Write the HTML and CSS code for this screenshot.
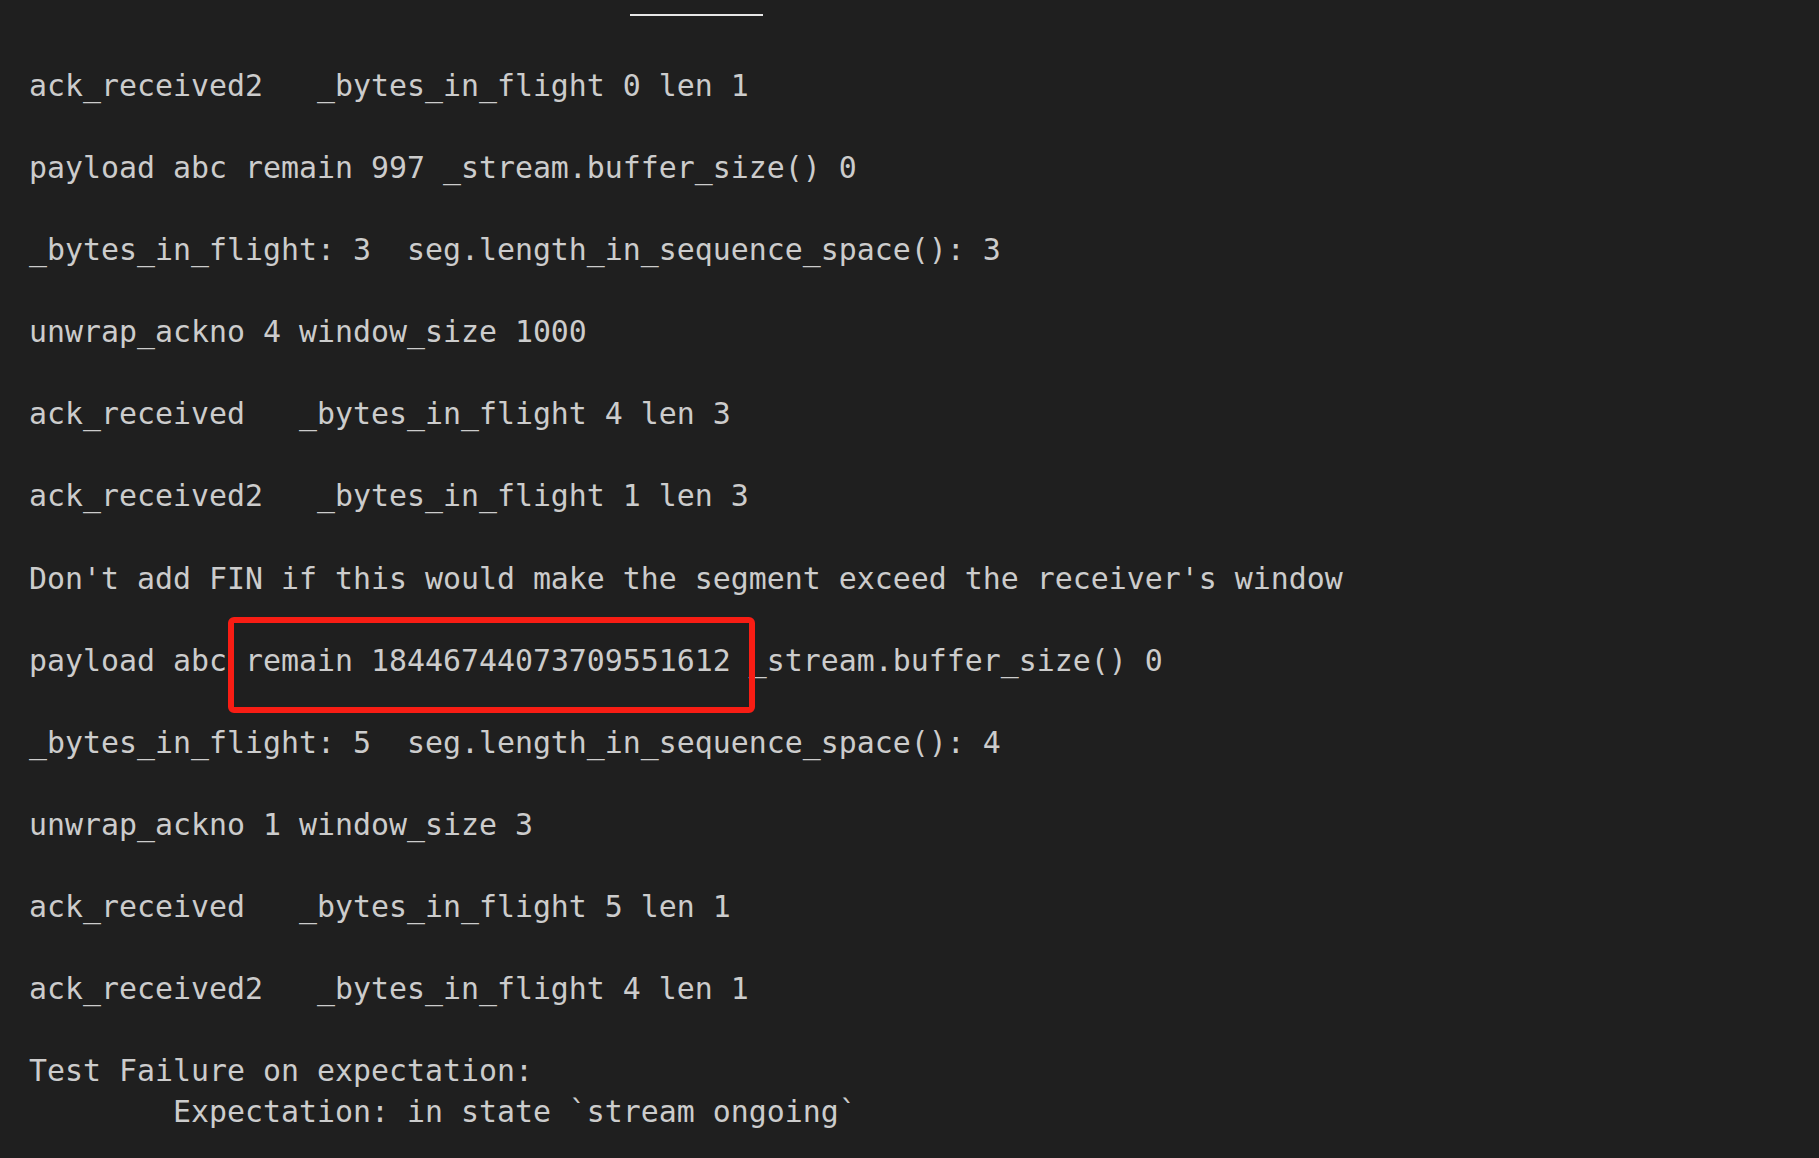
FILE: index.html
```html
<!DOCTYPE html>
<html>
<head>
<meta charset="utf-8">
<link rel="stylesheet" href="styles.css">
</head>
<body>
<div class="rule"></div>
<pre class="log">ack_received2   _bytes_in_flight 0 len 1

payload abc remain 997 _stream.buffer_size() 0

_bytes_in_flight: 3  seg.length_in_sequence_space(): 3

unwrap_ackno 4 window_size 1000

ack_received   _bytes_in_flight 4 len 3

ack_received2   _bytes_in_flight 1 len 3

Don't add FIN if this would make the segment exceed the receiver's window

payload abc<span class="mark"> remain 18446744073709551612 </span>_stream.buffer_size() 0

_bytes_in_flight: 5  seg.length_in_sequence_space(): 4

unwrap_ackno 1 window_size 3

ack_received   _bytes_in_flight 5 len 1

ack_received2   _bytes_in_flight 4 len 1

Test Failure on expectation:
	Expectation: in state `stream ongoing`
</pre>
</body>
</html>
```

FILE: styles.css
```css
html, body {
  margin: 0;
  padding: 0;
  background: #1f1f1f;
  height: 100%;
  overflow: hidden;
}

.rule {
  margin: 14px 0 0 630px;
  width: 133px;
  height: 2px;
  background: #e6e6e6;
}

.log {
  margin: 49px 0 0 29px;
  font-family: "DejaVu Sans Mono", "Liberation Mono", monospace;
  font-size: 29.9px;
  line-height: 41.04px;
  color: #cccccc;
  tab-size: 8;
  white-space: pre;
}

.mark {
  position: relative;
}

.mark::after {
  content: "";
  position: absolute;
  left: 1px;
  right: -6px;
  top: -26px;
  bottom: -35px;
  border: 6px solid #f81d14;
  border-radius: 6px;
}
```
